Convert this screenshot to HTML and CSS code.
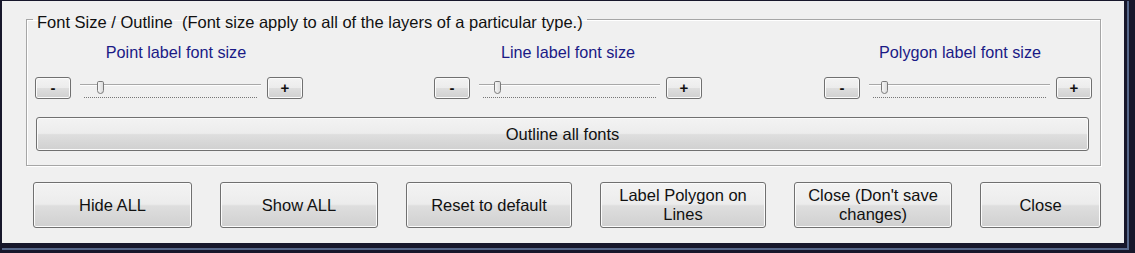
FILE: index.html
```html
<!DOCTYPE html>
<html>
<head>
<meta charset="utf-8">
<link rel="stylesheet" href="styles.css">
</head>
<body>
<div class="window">
  <div class="ring">
    <div class="client">
      <fieldset class="group">
        <legend>Font Size / Outline&nbsp; (Font size apply to all of the layers of a particular type.)</legend>
        <div class="sizes">
          <div class="size-ctl">
            <div class="size-label label-point">Point label font size</div>
            <div class="size-row">
              <button class="btn small">-</button>
              <div class="slider"><span class="track"></span><span class="ticks"></span><span class="thumb t-point"></span></div>
              <button class="btn small">+</button>
            </div>
          </div>
          <div class="size-ctl">
            <div class="size-label">Line label font size</div>
            <div class="size-row">
              <button class="btn small">-</button>
              <div class="slider"><span class="track"></span><span class="ticks"></span><span class="thumb t-line"></span></div>
              <button class="btn small">+</button>
            </div>
          </div>
          <div class="size-ctl">
            <div class="size-label label-poly">Polygon label font size</div>
            <div class="size-row">
              <button class="btn small">-</button>
              <div class="slider"><span class="track"></span><span class="ticks"></span><span class="thumb t-poly"></span></div>
              <button class="btn small">+</button>
            </div>
          </div>
        </div>
        <button class="btn outline">Outline all fonts</button>
      </fieldset>
      <div class="actions">
        <button class="btn big w-hide">Hide ALL</button>
        <button class="btn big w-show">Show ALL</button>
        <button class="btn big w-reset">Reset to default</button>
        <button class="btn big w-label">Label Polygon on Lines</button>
        <button class="btn big w-nosave">Close (Don't save changes)</button>
        <button class="btn big w-close">Close</button>
      </div>
    </div>
  </div>
</div>
</body>
</html>
```

FILE: styles.css
```css
* { box-sizing: border-box; }
html, body { margin: 0; padding: 0; }
body {
  width: 1135px;
  height: 253px;
  overflow: hidden;
  font-family: "Liberation Sans", Arial, sans-serif;
  font-size: 16.5px;
  color: #111;
}
.window {
  width: 1135px;
  height: 253px;
  background: #17172b;
  padding: 1px 0 0 2px;
}
.ring {
  width: 1127px;
  height: 249px;
  background: #17172b;
  border-right: 2px solid #56678a;
  border-bottom: 2px solid #56678a;
}
.client {
  width: 1122px;
  height: 242px;
  background: #f0f0f0;
  padding-top: 6px;
  overflow: hidden;
}
.group {
  margin: 0 0 0 24px;
  width: 1075px;
  border: 1px solid #a6a6a6;
  box-shadow: inset 1px 1px 0 #fff, 1px 1px 0 #fff;
  padding: 12px 10px 14px 8px;
  min-width: 0;
}
.group legend {
  font-size: 16.5px;
  line-height: 18px;
  padding: 6px 4px 0 4px;
  margin-left: -2px;
  color: #111;
}
.sizes {
  display: grid;
  grid-template-columns: 399px 390px 268px;
}
.size-ctl { width: 268px; }
.size-label {
  text-align: center;
  color: #1a1a86;
  line-height: 18px;
  font-size: 16.2px;
}
.label-point { padding-left: 14px; }
.label-poly { padding-left: 4px; }
.size-row {
  display: flex;
  align-items: flex-start;
  margin-top: 16px;
}
.btn {
  font-family: "Liberation Sans", Arial, sans-serif;
  font-size: 16.5px;
  color: #111;
  border: 1px solid #707070;
  border-radius: 3px;
  background: linear-gradient(#f3f3f3 0%, #ececec 48%, #dedede 52%, #d0d0d0 100%);
  box-shadow: inset 0 0 0 1px #fbfbfb;
  padding: 0 6px;
  margin: 0;
  line-height: 19px;
}
.btn.small {
  width: 36px;
  height: 22px;
  font-weight: bold;
  font-size: 15px;
  line-height: 18px;
  padding: 0;
}
.slider {
  position: relative;
  flex: 1;
  height: 22px;
  margin: 0 6px 0 9px;
}
.track {
  display: block;
  margin-top: 7px;
  height: 2px;
  border-top: 1px solid #a8a8a8;
  border-bottom: 1px solid #fdfdfd;
}
.ticks {
  display: block;
  margin: 11px 4px 0 4px;
  border-top: 1px dotted #777;
}
.thumb {
  position: absolute;
  top: 4px;
  width: 7px;
  height: 13px;
  border: 1px solid #7a7a7a;
  border-radius: 2px 2px 4px 4px;
  background: linear-gradient(90deg, #f6f6f6, #dcdcdc);
}
.t-point { left: 17px; }
.t-line { left: 15px; }
.t-poly { left: 12px; }
.btn.outline {
  display: block;
  width: 1053px;
  height: 34px;
  margin: 18px 0 0 1px;
}
.actions {
  display: flex;
  gap: 28px;
  padding: 16px 0 0 31px;
}
.btn.big { height: 46px; }
.w-hide { width: 159px; }
.w-show { width: 158px; }
.w-reset { width: 166px; }
.w-label { width: 166px; }
.w-nosave { width: 158px; }
.w-close { width: 121px; }
```
